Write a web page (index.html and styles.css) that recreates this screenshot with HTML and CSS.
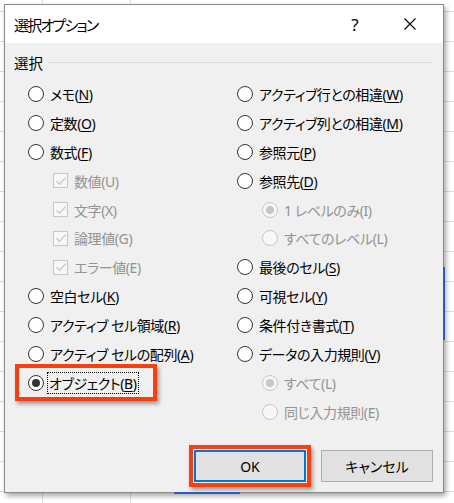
FILE: index.html
```html
<!DOCTYPE html>
<html lang="ja">
<head>
<meta charset="utf-8">
<link rel="stylesheet" href="styles.css">
</head>
<body>
<div class="sheet">
  <div class="sel-right"></div>
  <div class="sel-bottom"></div>
  <div class="dialog">
    <div class="titlebar">
      <span class="title">選択オプション</span>
      <span class="help">?</span>
      <span class="close">
        <svg width="12" height="12" viewBox="0 0 12 12"><path d="M0.5 0.5 L11.5 11.5 M11.5 0.5 L0.5 11.5" stroke="#000" stroke-width="1.1" fill="none"/></svg>
      </span>
    </div>
    <div class="content">
      <div class="group-label"><span>選択</span><span class="line"></span></div>
      <div class="columns">
        <div class="col">
          <div class="row"><span class="radio"></span><span class="lbl">メモ(<u>N</u>)</span></div>
          <div class="row"><span class="radio"></span><span class="lbl">定数(<u>O</u>)</span></div>
          <div class="row"><span class="radio"></span><span class="lbl">数式(<u>F</u>)</span></div>
          <div class="row sub dis"><span class="check"><svg width="12" height="12" viewBox="0 0 12 12"><path d="M1.5 6.2 L4.6 9.2 L10.6 2.6" stroke="#c9c9c9" stroke-width="1.3" fill="none"/></svg></span><span class="lbl">数値(U)</span></div>
          <div class="row sub dis"><span class="check"><svg width="12" height="12" viewBox="0 0 12 12"><path d="M1.5 6.2 L4.6 9.2 L10.6 2.6" stroke="#c9c9c9" stroke-width="1.3" fill="none"/></svg></span><span class="lbl">文字(X)</span></div>
          <div class="row sub dis"><span class="check"><svg width="12" height="12" viewBox="0 0 12 12"><path d="M1.5 6.2 L4.6 9.2 L10.6 2.6" stroke="#c9c9c9" stroke-width="1.3" fill="none"/></svg></span><span class="lbl">論理値(G)</span></div>
          <div class="row sub dis"><span class="check"><svg width="12" height="12" viewBox="0 0 12 12"><path d="M1.5 6.2 L4.6 9.2 L10.6 2.6" stroke="#c9c9c9" stroke-width="1.3" fill="none"/></svg></span><span class="lbl">エラー値(E)</span></div>
          <div class="row"><span class="radio"></span><span class="lbl">空白セル(<u>K</u>)</span></div>
          <div class="row"><span class="radio"></span><span class="lbl">アクティブ セル領域(<u>R</u>)</span></div>
          <div class="row"><span class="radio"></span><span class="lbl">アクティブ セルの配列(<u>A</u>)</span></div>
          <div class="row marked"><span class="radio on"></span><span class="lbl focus">オブジェクト(<u>B</u>)</span><span class="mark"></span></div>
        </div>
        <div class="col">
          <div class="row"><span class="radio"></span><span class="lbl">アクティブ行との相違(<u>W</u>)</span></div>
          <div class="row"><span class="radio"></span><span class="lbl">アクティブ列との相違(<u>M</u>)</span></div>
          <div class="row"><span class="radio"></span><span class="lbl">参照元(<u>P</u>)</span></div>
          <div class="row"><span class="radio"></span><span class="lbl">参照先(<u>D</u>)</span></div>
          <div class="row sub dis"><span class="radio on"></span><span class="lbl">1 レベルのみ(I)</span></div>
          <div class="row sub dis"><span class="radio"></span><span class="lbl">すべてのレベル(L)</span></div>
          <div class="row"><span class="radio"></span><span class="lbl">最後のセル(<u>S</u>)</span></div>
          <div class="row"><span class="radio"></span><span class="lbl">可視セル(<u>Y</u>)</span></div>
          <div class="row"><span class="radio"></span><span class="lbl">条件付き書式(<u>T</u>)</span></div>
          <div class="row"><span class="radio"></span><span class="lbl">データの入力規則(<u>V</u>)</span></div>
          <div class="row sub dis"><span class="radio on"></span><span class="lbl">すべて(L)</span></div>
          <div class="row sub dis"><span class="radio"></span><span class="lbl">同じ入力規則(E)</span></div>
        </div>
      </div>
    </div>
    <div class="buttons">
      <button class="btn default">OK</button>
      <button class="btn">キャンセル</button>
    </div>
  </div>
</div>
</body>
</html>
```

FILE: styles.css
```css
html, body {
  margin: 0;
  padding: 0;
}
body {
  width: 454px;
  height: 503px;
  overflow: hidden;
  background: #fff;
  font-family: "Noto Sans", "Noto Sans CJK JP", sans-serif;
  font-feature-settings: "palt";
  color: #000;
}
.sheet {
  position: relative;
  width: 454px;
  height: 503px;
  padding-top: 4px;
  box-sizing: border-box;
  background-color: #fff;
  background-image:
    repeating-linear-gradient(to bottom, transparent 0, transparent 11px, #dcdcdc 11px, #dcdcdc 12px, transparent 12px, transparent 30px),
    linear-gradient(to right, transparent 42px, #dcdcdc 42px, #dcdcdc 43px, transparent 43px, transparent 130px, #dcdcdc 130px, #dcdcdc 131px, transparent 131px);
}
.sel-right {
  position: absolute;
  left: 443px;
  top: 267px;
  width: 2px;
  height: 73px;
  background: #2f5bb7;
  z-index: 2;
}
.sel-bottom {
  position: absolute;
  left: 174px;
  top: 492px;
  width: 66px;
  height: 2px;
  background: #2f5bb7;
  z-index: 2;
}
.dialog {
  margin-left: 4px;
  width: 440px;
  height: 489px;
  box-sizing: border-box;
  border: 1px solid #8a8a8a;
  background: #f0f0f0;
  box-shadow: 2px 3px 5px rgba(0, 0, 0, 0.35);
  display: flex;
  flex-direction: column;
  position: relative;
}
.titlebar {
  height: 38px;
  flex: none;
  background: #fff;
  display: flex;
  align-items: center;
  padding-left: 9px;
  padding-right: 10px;
  font-size: 15px;
}
.title {
  font-size: 15px;
  letter-spacing: -1.8px;
}
.help {
  margin-left: auto;
  width: 40px;
  text-align: center;
  font-size: 17px;
  font-family: "Noto Sans", sans-serif;
}
.close {
  margin-left: 12px;
  width: 46px;
  display: flex;
  justify-content: center;
  align-items: center;
}
.content {
  padding-top: 9px;
  font-size: 14px;
}
.group-label {
  display: flex;
  align-items: center;
  height: 20px;
  padding-left: 9px;
  padding-right: 10px;
  gap: 5px;
  font-size: 14.5px;
}
.group-label .line {
  flex: 1;
  border-top: 1px solid #dadada;
}
.columns {
  display: grid;
  grid-template-columns: 209px 1fr;
  padding-left: 23px;
  margin-top: 7.5px;
}
.row {
  height: 28.9px;
  display: flex;
  align-items: center;
  gap: 6px;
  position: relative;
  white-space: nowrap;
}
.lbl {
  letter-spacing: -0.4px;
}
.row.sub {
  padding-left: 25px;
}
.radio {
  width: 16px;
  height: 16px;
  box-sizing: border-box;
  border: 1px solid #333;
  border-radius: 50%;
  background: #fff;
  flex: none;
  display: flex;
  align-items: center;
  justify-content: center;
}
.radio.on::after {
  content: "";
  width: 8px;
  height: 8px;
  border-radius: 50%;
  background: #333;
}
.dis {
  color: #939393;
}
.dis .radio {
  border-color: #c6c6c6;
  background: #f7f7f7;
}
.dis .radio.on::after {
  background: #c6c6c6;
}
.check {
  width: 15px;
  height: 15px;
  box-sizing: border-box;
  border: 1px solid #c6c6c6;
  background: #f7f7f7;
  flex: none;
  display: flex;
  align-items: center;
  justify-content: center;
}
.lbl u {
  text-decoration-thickness: 1px;
  text-underline-offset: 2px;
}
.lbl.focus {
  outline: 1px dotted #000;
  padding: 0 1px;
  margin-left: -2px;
}
.mark {
  position: absolute;
  left: -13px;
  top: -4px;
  width: 142px;
  height: 37px;
  box-sizing: border-box;
  border: 4px solid #f5400f;
  box-shadow: 2px 3px 4px rgba(0, 0, 0, 0.35);
}
.buttons {
  margin-top: auto;
  margin-bottom: 10px;
  display: flex;
  justify-content: flex-end;
  gap: 15px;
  padding-right: 10px;
}
.btn {
  width: 112px;
  height: 32px;
  box-sizing: border-box;
  border: 1px solid #adadad;
  background: #e1e1e1;
  font-family: "Noto Sans", "Noto Sans CJK JP", sans-serif;
  font-feature-settings: "palt";
  font-size: 14px;
  color: #000;
  padding: 0;
  position: relative;
}
.btn.default {
  border: 2px solid #0078d7;
}
.btn.default::after {
  content: "";
  position: absolute;
  left: -7px;
  top: -7px;
  right: -7px;
  bottom: -7px;
  border: 4px solid #f5400f;
  box-shadow: 2px 3px 4px rgba(0, 0, 0, 0.35);
}
```
